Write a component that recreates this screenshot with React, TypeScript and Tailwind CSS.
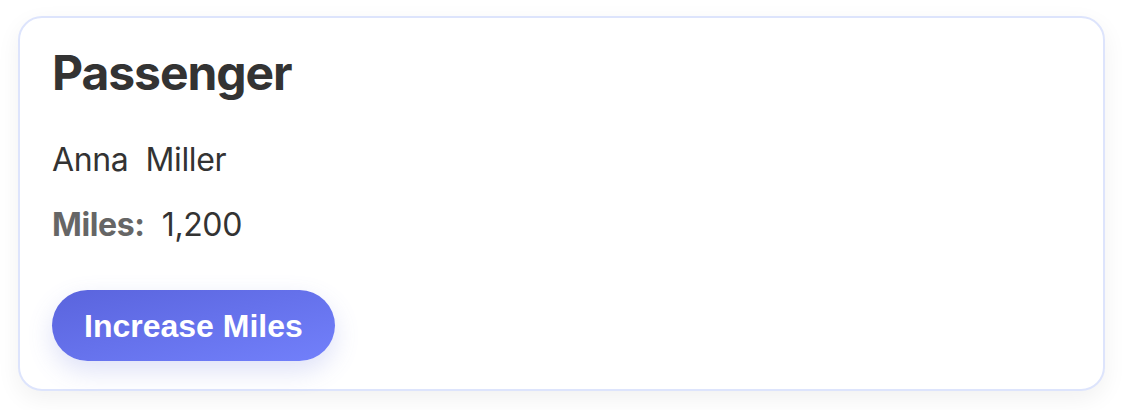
const App = () => {
  return (
    <div className="min-h-screen bg-white pt-4 pr-[17px] pb-5 pl-[18px] font-['Inter','Noto_Sans',sans-serif]">
      <div className="rounded-[24px] border-2 border-[#dde4fc] bg-white px-8 pt-[26px] pb-[28px] shadow-[0_8px_24px_rgba(0,0,0,0.06)]">
        <h1 className="text-[48px] leading-[58px] font-bold tracking-[-0.022em] text-[#333333]">Passenger</h1>

        <p className="mt-[34px] text-[32px] leading-[48px] tracking-[-0.012em] text-[#333333]">Anna&nbsp; Miller</p>

        <p className="mt-[17px] text-[32px] leading-[48px] tracking-[-0.012em] text-[#333333]">
          <span className="font-bold text-[#666666]">Miles:</span>&nbsp; 1,200
        </p>

        <button
          type="button"
          className="mt-[41px] flex h-[71px] items-center rounded-full bg-linear-to-br from-[#5a64dd] to-[#7280fb] px-8 font-['Liberation_Sans',Arial,sans-serif] text-[32px] font-bold text-white shadow-[0_10px_26px_rgba(90,103,216,0.2)]"
        >
          Increase Miles
        </button>
      </div>
    </div>
  );
};

export default App;
